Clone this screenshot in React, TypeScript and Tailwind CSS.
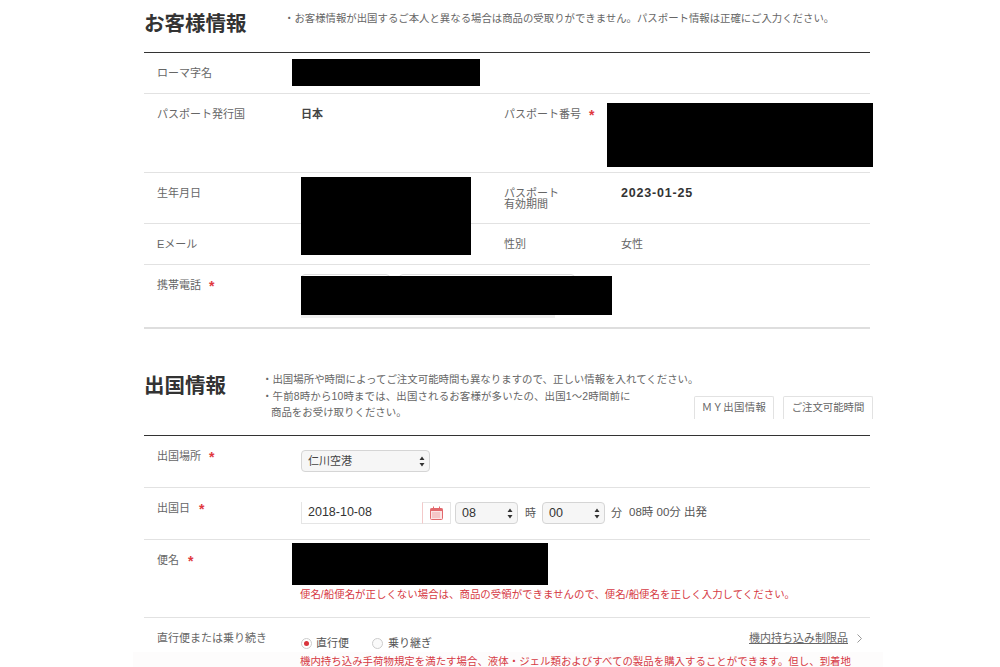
import React from "react";

const FONT = "font-['Liberation_Sans','Noto_Sans_CJK_JP',sans-serif]";

function Star({ className = "" }: { className?: string }) {
  return <span className={`text-[14px] leading-none font-bold text-[#e0383e] ${className}`}>*</span>;
}

function Label({ children, star, gap = "ml-[8px]" }: { children: React.ReactNode; star?: boolean; gap?: string }) {
  return (
    <div className="flex w-[144px] shrink-0 items-start pl-[13px] text-[11px] leading-[13px] text-[#666]">
      <span>{children}</span>
      {star && <Star className={gap} />}
    </div>
  );
}

function Row({ h, children, className = "" }: { h: string; children: React.ReactNode; className?: string }) {
  return <div className={`flex border-b border-[#e2e2e2] ${h} ${className}`}>{children}</div>;
}

function Sel({ w, children, className = "" }: { w: string; children: React.ReactNode; className?: string }) {
  return (
    <div className={`flex h-[22px] items-center justify-between rounded-[4px] border border-[#d5d5d5] bg-[#f6f6f6] pl-[6px] pr-[4px] text-[#444] ${w} ${className}`}>
      <span>{children}</span>
      <svg width="6" height="11" viewBox="0 0 6 11"><path d="M3 0.5 5.5 4H.5zM3 10.5 .5 7h5z" fill="#333" /></svg>
    </div>
  );
}

function Black({ className }: { className: string }) {
  return <div className={`absolute bg-black ${className}`} />;
}

export default function App() {
  return (
    <div className={`relative h-[667px] w-[1000px] overflow-hidden bg-white ${FONT}`}>
      <div className="absolute bottom-0 left-[133px] h-[15px] w-[750px] bg-[#fdfcfc]" />
      <div className="relative ml-[144px] w-[726px]">
        <div className="flex h-[53px] items-start border-b border-[#333] pt-[10px]">
          <h2 className="w-[140px] text-[20.5px] font-bold leading-[28px] text-[#333]">お客様情報</h2>
          <p className="mt-[2px] text-[10.4px] leading-[14px] text-[#666]">・お客様情報が出国するご本人と異なる場合は商品の受取りができません。パスポート情報は正確にご入力ください。</p>
        </div>

        <Row h="h-[41px]" className="pt-[14px]"><Label>ローマ字名</Label></Row>

        <Row h="h-[79px]" className="pt-[14px]">
          <Label>パスポート発行国</Label>
          <div className="ml-[13px] w-[203px] text-[11px] font-bold leading-[13px] text-[#444]">日本</div>
          <div className="flex items-start text-[11px] leading-[13px] text-[#666]"><span>パスポート番号</span><Star className="ml-[8px]" /></div>
        </Row>

        <Row h="h-[51px]" className="pt-[14px]">
          <Label>生年月日</Label>
          <div className="ml-[13px] w-[203px]" />
          <div className="mt-[1px] w-[117px] text-[11px] leading-[11px] text-[#666]">パスポート<br />有効期間</div>
          <div className="text-[12.5px] font-bold leading-[13px] tracking-[0.8px] text-[#333]">2023-01-25</div>
        </Row>

        <Row h="h-[41px]" className="pt-[14px]">
          <Label>Eメール</Label>
          <div className="ml-[13px] w-[203px]" />
          <div className="w-[117px] text-[11px] leading-[13px] text-[#666]">性別</div>
          <div className="text-[11px] leading-[13px] text-[#666]">女性</div>
        </Row>

        <div className="flex h-[64px] border-b-2 border-[#dedede] pt-[14px]">
          <Label star>携帯電話</Label>
          <div className="ml-[13px] -mt-[5px]">
            <div className="flex gap-[9px]">
              <div className="h-[22px] w-[89px] rounded-[4px] border border-[#ddd]" />
              <div className="h-[22px] w-[176px] rounded-[4px] border border-[#ddd]" />
            </div>
            <div className="mt-[19px] h-[3px] w-[254px] bg-[#efefef]" />
          </div>
        </div>

        <div className="flex h-[107px] border-b border-[#333]">
          <h2 className="mt-[43px] w-[118px] text-[20.5px] font-bold leading-[28px] text-[#333]">出国情報</h2>
          <div className="relative mt-[43px] flex-1 text-[10.45px] leading-[16.5px] text-[#666]">
            <p>・出国場所や時間によってご注文可能時間も異なりますので、正しい情報を入れてください。</p>
            <p className="tracking-[0.15px]">・午前8時から10時までは、出国されるお客様が多いたの、出国1〜2時間前に</p>
            <p className="ml-[9px]">商品をお受け取りください。</p>
            <div className="absolute -right-[3px] top-[24px] flex gap-[9px] text-[10.4px] text-[#666]">
              <div className="flex h-[23px] w-[80px] items-center justify-center rounded-t-[2px] border border-b-0 border-[#e2e2e2] tracking-[0.4px]">ＭＹ出国情報</div>
              <div className="flex h-[23px] w-[90px] items-center justify-center rounded-t-[2px] border border-b-0 border-[#e2e2e2]">ご注文可能時間</div>
            </div>
          </div>
        </div>

        <Row h="h-[52px]" className="pt-[14px]">
          <Label star>出国場所</Label>
          <Sel w="w-[129px]" className="ml-[13px] text-[11px]">仁川空港</Sel>
        </Row>

        <Row h="h-[52px]" className="pt-[14px]">
          <Label star gap="ml-[9px]">出国日</Label>
          <div className="ml-[13px] flex items-center self-start text-[11.5px] text-[#555]">
            <div className="flex h-[22px] w-[121px] items-center border-b border-l border-[#e5e5e5] pl-[6px] text-[12.5px] text-[#333]">2018-10-08</div>
            <div className="flex h-[22px] w-[29px] items-center justify-center border border-[#e5e5e5] border-l-[#f3c9c9]">
              <svg width="13" height="14" viewBox="0 0 13 14" fill="none">
                <rect x="0.5" y="2.5" width="12" height="11" rx="1" fill="#fbe4e4" stroke="#e2686c" />
                <rect x="0.5" y="2.5" width="12" height="2.5" fill="#e2686c" />
                <path d="M3.5 .5v2.5M9.5 .5v2.5" stroke="#e2686c" />
                <path d="M2.5 7h8M2.5 9h8M2.5 11h8" stroke="#e2686c" strokeDasharray="1 1" />
              </svg>
            </div>
            <Sel w="w-[63px]" className="ml-[4px] text-[12.5px] !text-[#333]">08</Sel>
            <span className="ml-[7px] text-[11px]">時</span>
            <Sel w="w-[63px]" className="ml-[6px] text-[12.5px] !text-[#333]">00</Sel>
            <span className="ml-[6px] text-[11px]">分</span>
            <span className="ml-[7px]">08時 00分 出発</span>
          </div>
        </Row>

        <Row h="h-[78px]" className="pt-[14px]">
          <Label star gap="ml-[9px]">便名</Label>
          <div className="ml-[12px] mt-[34px] text-[10.45px] leading-[14px] text-[#d63a44]">便名/船便名が正しくない場合は、商品の受領ができませんので、便名/船便名を正しく入力してください。</div>
        </Row>

        <div className="flex pt-[14px]">
          <Label>直行便または乗り続き</Label>
          <div className="ml-[13px] flex-1">
            <div className="flex items-start text-[11px] leading-[13px] text-[#555]">
              <span className="mt-[5px] flex items-center">
                <span className="flex h-[11px] w-[11px] items-center justify-center rounded-full border border-[#ccc] bg-white"><span className="h-[5px] w-[5px] rounded-full bg-[#d9343c]" /></span>
                <span className="ml-[4px]">直行便</span>
                <span className="ml-[23px] h-[11px] w-[11px] rounded-full border border-[#ccc] bg-[#fafafa]" />
                <span className="ml-[5px]">乗り継ぎ</span>
              </span>
              <span className="ml-auto mr-[8px] flex items-center text-[#666]">
                <span className="underline">機内持ち込み制限品</span>
                <svg className="ml-[9px]" width="5" height="9" viewBox="0 0 5 9" fill="none"><path d="M.5.5l4 4-4 4" stroke="#999" /></svg>
              </span>
            </div>
            <p className="-ml-[1px] mt-[4px] w-[560px] whitespace-nowrap text-[10.45px] leading-[16px] text-[#d63a44]">機内持ち込み手荷物規定を満たす場合、液体・ジェル類およびすべての製品を購入することができます。但し、到着地</p>
          </div>
        </div>

        <Black className="left-[148px] top-[59px] h-[27px] w-[188px]" />
        <Black className="left-[157px] top-[177px] h-[78px] w-[170px]" />
        <Black className="left-[463px] top-[103px] h-[64px] w-[266px]" />
        <Black className="left-[157px] top-[276px] h-[39px] w-[311px]" />
        <Black className="left-[148px] top-[543px] h-[42px] w-[256px]" />
      </div>
    </div>
  );
}
